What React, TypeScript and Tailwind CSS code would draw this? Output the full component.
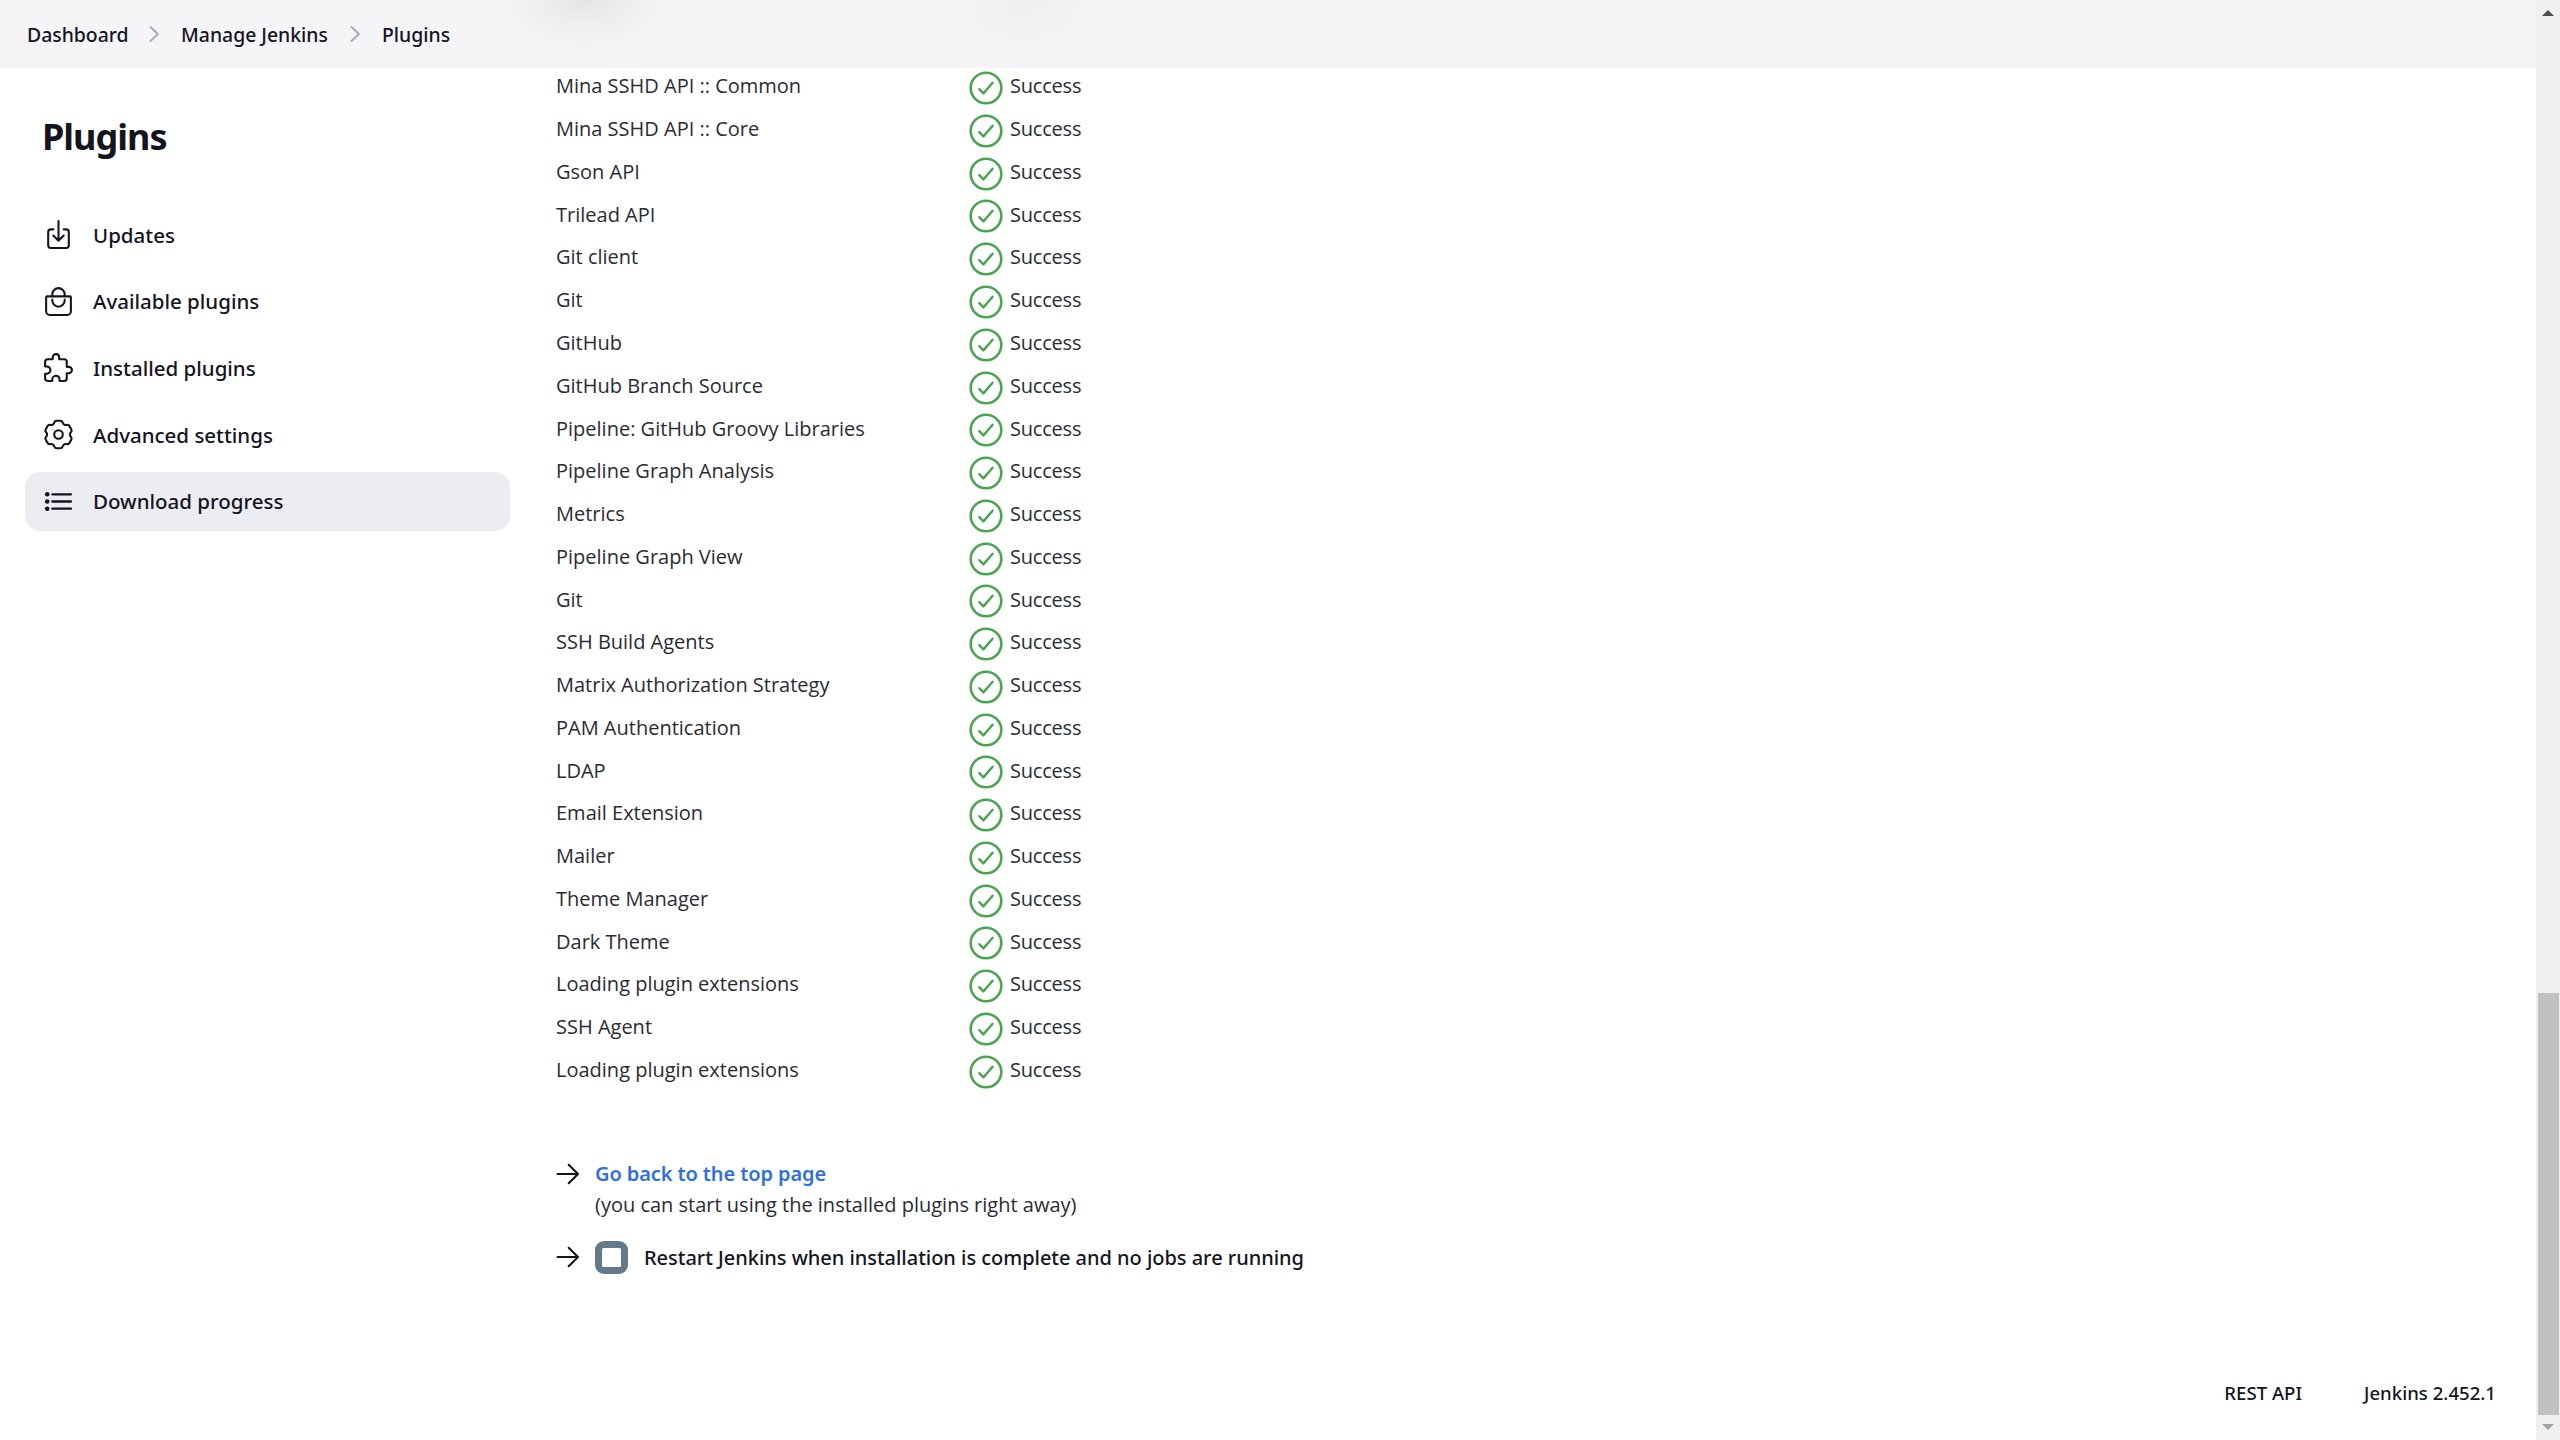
import React from 'react';
import { IoBagHandleOutline, IoDownloadOutline, IoExtensionPuzzleOutline } from 'react-icons/io5';

const plugins = [
  'Mina SSHD API :: Common',
  'Mina SSHD API :: Core',
  'Gson API',
  'Trilead API',
  'Git client',
  'Git',
  'GitHub',
  'GitHub Branch Source',
  'Pipeline: GitHub Groovy Libraries',
  'Pipeline Graph Analysis',
  'Metrics',
  'Pipeline Graph View',
  'Git',
  'SSH Build Agents',
  'Matrix Authorization Strategy',
  'PAM Authentication',
  'LDAP',
  'Email Extension',
  'Mailer',
  'Theme Manager',
  'Dark Theme',
  'Loading plugin extensions',
  'SSH Agent',
  'Loading plugin extensions',
];

function gearPath() {
  const points: [number, number][] = [];
  for (let lobe = 0; lobe < 6; lobe++) {
    const steps: [number, number][] = [[-23, 11.5], [-15, 14.2], [15, 14.2], [23, 11.5]];
    for (const [offset, radius] of steps) {
      const angle = ((lobe * 60 - 90 + offset) * Math.PI) / 180;
      points.push([16.5 + radius * Math.cos(angle), 16.5 + radius * Math.sin(angle)]);
    }
  }
  const toward = (a: [number, number], b: [number, number]) => {
    const length = Math.hypot(b[0] - a[0], b[1] - a[1]);
    const t = Math.min(2.2 / length, 0.5);
    return `${(a[0] + (b[0] - a[0]) * t).toFixed(2)} ${(a[1] + (b[1] - a[1]) * t).toFixed(2)}`;
  };
  const n = points.length;
  return (
    points
      .map((p, i) => {
        const previous = points[(i + n - 1) % n];
        const next = points[(i + 1) % n];
        return `${i === 0 ? 'M' : 'L'}${toward(p, previous)}Q${p[0].toFixed(2)} ${p[1].toFixed(2)} ${toward(p, next)}`;
      })
      .join('') + 'Z'
  );
}

const gear = gearPath();

function GearIcon() {
  return (
    <svg viewBox="0 0 33 33" className="size-[33px] shrink-0" fill="none" stroke="currentColor" strokeWidth="2.1" strokeLinejoin="round">
      <path d={gear} />
      <circle cx="16.5" cy="16.5" r="4.3" />
    </svg>
  );
}

function ListIcon() {
  return (
    <svg viewBox="0 0 33 33" className="size-[33px] shrink-0" fill="none" stroke="currentColor" strokeWidth="2.3" strokeLinecap="round">
      <path d="M10.3 9.3H29M10.3 16.5H29M10.3 23.7H29" />
      <g fill="currentColor" stroke="none">
        <circle cx="5.2" cy="9.3" r="2.3" />
        <circle cx="5.2" cy="16.5" r="2.3" />
        <circle cx="5.2" cy="23.7" r="2.3" />
      </g>
    </svg>
  );
}

function ChevronIcon({ className }: { className: string }) {
  return (
    <svg viewBox="0 0 11 18" className={`h-[18px] w-[11px] ${className}`} fill="none" stroke="#a9a9b8" strokeWidth="2" strokeLinecap="round" strokeLinejoin="round">
      <path d="M1.5 2L8.8 9L1.5 16" />
    </svg>
  );
}

function SuccessIcon() {
  return (
    <svg viewBox="0 0 34 34" className="mt-[3.6px] size-[34px] shrink-0" fill="none" stroke="#4ba550" strokeLinecap="round" strokeLinejoin="round">
      <circle cx="17" cy="17" r="15.3" strokeWidth="2.6" />
      <path d="M10.3 18.2L14.4 22.4L23.6 11.7" strokeWidth="2.4" />
    </svg>
  );
}

function ArrowIcon() {
  return (
    <svg viewBox="0 0 24 24" className="size-6 shrink-0" fill="none" stroke="currentColor" strokeWidth="2.1" strokeLinecap="round" strokeLinejoin="round">
      <path d="M1.5 12H22M12.7 2.8L22 12L12.7 21.2" />
    </svg>
  );
}

const navItems = [
  { label: 'Updates', icon: <IoDownloadOutline className="size-[33px] shrink-0" /> },
  { label: 'Available plugins', icon: <IoBagHandleOutline className="size-[33px] shrink-0" /> },
  { label: 'Installed plugins', icon: <IoExtensionPuzzleOutline className="size-[33px] shrink-0" /> },
  { label: 'Advanced settings', icon: <GearIcon /> },
  { label: 'Download progress', icon: <ListIcon />, active: true },
];

function Breadcrumbs() {
  return (
    <header className="relative z-10 flex h-[68px] shrink-0 items-center overflow-hidden bg-[#f5f5f8] pl-[27px] text-[19.4px] font-medium">
      <div className="absolute -top-[62px] left-[490px] h-[120px] w-[190px] bg-[radial-gradient(closest-side,#e4e4e7,#ededf0_40%,#f2f2f5_70%,#f5f5f8)]" />
      <div className="absolute -top-[75px] left-[920px] h-[150px] w-[210px] bg-[radial-gradient(closest-side,#edeff1,#f1f3f5_55%,#f5f5f8)]" />
      <a className="w-[122px] pt-0.5">Dashboard</a>
      <ChevronIcon className="mr-[21px]" />
      <a className="w-[169px] pt-0.5">Manage Jenkins</a>
      <ChevronIcon className="mr-[21px]" />
      <a className="pt-0.5">Plugins</a>
    </header>
  );
}

function Sidebar() {
  return (
    <aside className="w-[510px] shrink-0 pl-[25px]">
      <h1 className="mt-[39px] pl-[17px] text-[36px] leading-[60px] font-bold tracking-[-1px]">Plugins</h1>
      <nav className="mt-[38px] flex flex-col gap-[7.7px]">
        {navItems.map((item) => (
          <a
            key={item.label}
            className={`flex h-[59px] items-center gap-[18px] rounded-[15px] pl-[17px] text-[20.5px] font-medium ${item.active ? 'bg-[#ecedf3]' : ''}`}
          >
            {item.icon}
            <span className="pt-px">{item.label}</span>
          </a>
        ))}
      </nav>
    </aside>
  );
}

function Scrollbar() {
  return (
    <div className="flex w-6 shrink-0 flex-col items-center bg-[#f0f0f0]">
      <svg viewBox="0 0 12 6" className="mt-[10px] h-1.5 w-3 shrink-0" fill="#505050">
        <path d="M6 0L12 6H0Z" />
      </svg>
      <div className="mt-[977px] h-[422px] w-[21px] shrink-0 bg-[#c1c1c1]" />
      <svg viewBox="0 0 12 6" className="mt-[9px] h-1.5 w-3 shrink-0" fill="#a3a3a3">
        <path d="M0 0H12L6 6Z" />
      </svg>
    </div>
  );
}

export default function App() {
  return (
    <div className="flex h-[1440px] w-[2560px] overflow-hidden bg-white font-['Noto_Sans',sans-serif] text-[#14141f]">
      <div className="flex min-w-0 flex-1 flex-col">
        <Breadcrumbs />
        <div className="flex flex-1">
          <Sidebar />
          <main className="-mt-[3px] flex-1 pl-[46px]">
            <ul className="font-['Open_Sans',sans-serif] text-[20px] text-[#2b2b35]">
              {plugins.map((name, index) => (
                <li key={index} className="flex h-[42.77px] items-center">
                  <span className="w-[413px]">{name}</span>
                  <SuccessIcon />
                  <span className="ml-[7px] tracking-[-0.2px]">Success</span>
                </li>
              ))}
            </ul>
            <div className="mt-[67px] flex items-start gap-[15px]">
              <div className="flex h-[31px] items-center">
                <ArrowIcon />
              </div>
              <div className="text-[20px] leading-[31px]">
                <a className="block font-semibold tracking-[-0.1px] text-[#2f6fe4]">Go back to the top page</a>
                <p className="font-['Open_Sans',sans-serif] text-[#2b2b35]">(you can start using the installed plugins right away)</p>
              </div>
            </div>
            <label className="mt-[20px] flex h-[34px] items-center">
              <ArrowIcon />
              <span className="mr-[16px] ml-[15px] flex size-[33px] items-center justify-center rounded-[9px] bg-[#647989]">
                <span className="size-[19px] rounded-[1.5px] bg-white" />
              </span>
              <span className="pt-0.5 text-[20px] font-medium tracking-[-0.03px]">Restart Jenkins when installation is complete and no jobs are running</span>
            </label>
          </main>
        </div>
        <footer className="mb-[32px] flex h-[30px] shrink-0 items-center justify-end gap-[62px] pr-[40px] text-[18.6px] font-medium">
          <a>REST API</a>
          <a>Jenkins 2.452.1</a>
        </footer>
      </div>
      <Scrollbar />
    </div>
  );
}
